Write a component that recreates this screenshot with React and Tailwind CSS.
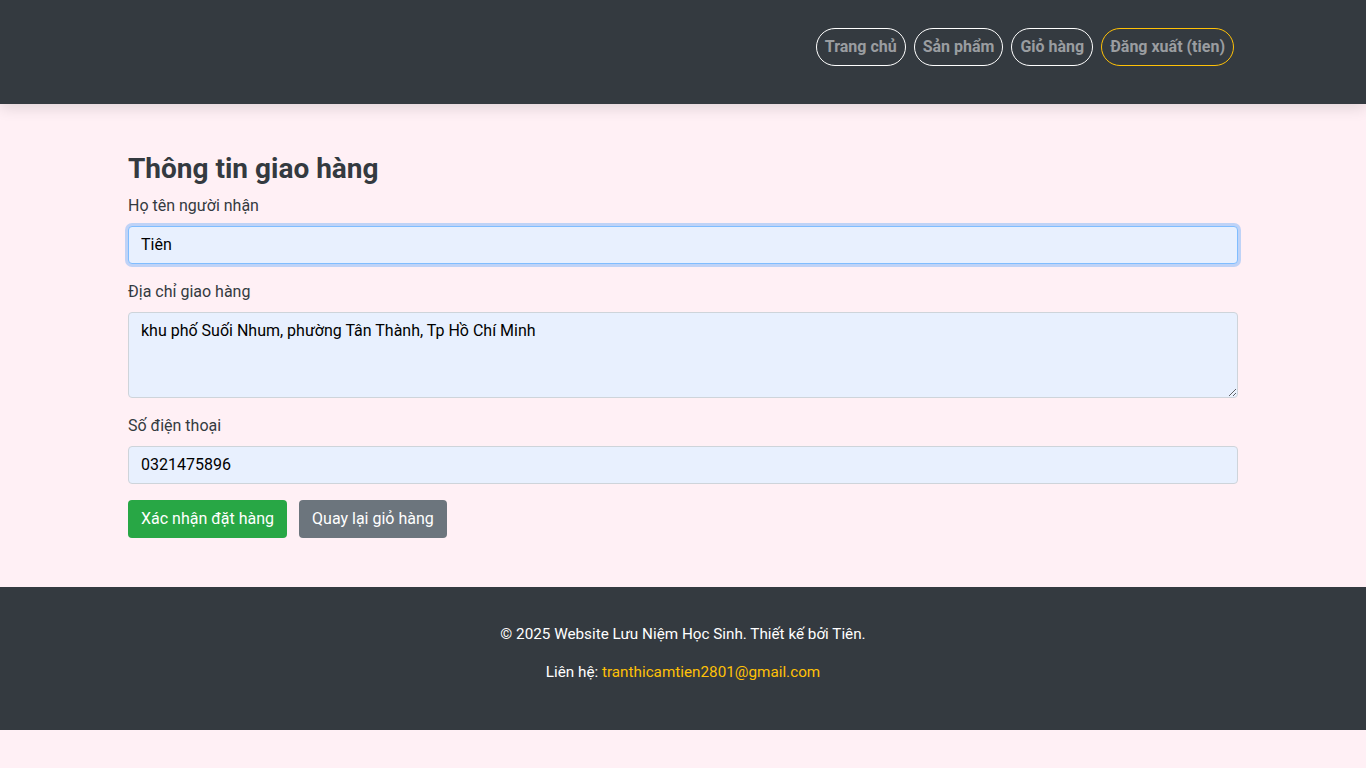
import React, { useState } from 'react';

const navLinks = ['Trang chủ', 'Sản phẩm', 'Giỏ hàng'];

const App = () => {
  const [name, setName] = useState('Tiên');
  const [address, setAddress] = useState('khu phố Suối Nhum, phường Tân Thành, Tp Hồ Chí Minh');
  const [phone, setPhone] = useState('0321475896');

  return (
    <div className="min-h-[768px] bg-[#fff0f5] text-[#212529]" style={{ fontFamily: 'Roboto, "Liberation Sans", sans-serif' }}>
      {/* Header */}
      <header className="relative z-10 h-[104px] bg-[#343a40] shadow-[0_4px_14px_rgba(0,0,0,0.12)]">
        <div className="mx-auto flex h-full w-[1140px] items-start justify-end px-[19px] pt-[28px]">
          <nav className="flex gap-2">
            {navLinks.map((l) => (
              <a key={l} href="#" className="flex h-[38px] items-center rounded-full border border-white px-2 text-base font-bold text-[#9a9da0]">
                {l}
              </a>
            ))}
            <a href="#" className="flex h-[38px] items-center rounded-full border border-[#ffc107] px-2 text-base font-bold text-[#9a9da0]">
              Đăng xuất (tien)
            </a>
          </nav>
        </div>
      </header>

      {/* Checkout form */}
      <main className="mx-auto w-[1140px] px-[15px] pt-[48px] pb-[49px]">
        <h3 className="mb-2 text-[28px] font-bold leading-[1.2] text-[#343a40]">Thông tin giao hàng</h3>
        <form onSubmit={(e) => e.preventDefault()}>
          <div className="mb-4">
            <label className="mb-2 block text-base leading-6 text-[#343a40]">Họ tên người nhận</label>
            <input
              value={name}
              onChange={(e) => setName(e.target.value)}
              className="block h-[38px] w-full rounded border border-[#80bdff] bg-[#e8f0fe] px-3 text-base text-black shadow-[0_0_0_3px_rgba(0,123,255,0.25)] outline-none"
            />
          </div>
          <div className="mb-4">
            <label className="mb-2 block text-base leading-6 text-[#343a40]">Địa chỉ giao hàng</label>
            <textarea
              rows={3}
              value={address}
              onChange={(e) => setAddress(e.target.value)}
              className="block h-[86px] w-full rounded border border-[#ced4da] bg-[#e8f0fe] px-3 py-[6px] text-base leading-6 text-black outline-none"
            />
          </div>
          <div className="mb-4">
            <label className="mb-2 block text-base leading-6 text-[#343a40]">Số điện thoại</label>
            <input
              value={phone}
              onChange={(e) => setPhone(e.target.value)}
              className="block h-[38px] w-full rounded border border-[#ced4da] bg-[#e8f0fe] px-3 text-base text-black outline-none"
            />
          </div>
          <div className="flex gap-3">
            <button type="submit" className="h-[38px] rounded bg-[#28a745] px-[13px] text-base text-white">
              Xác nhận đặt hàng
            </button>
            <button type="button" className="h-[38px] rounded bg-[#6c757d] px-[13px] text-base text-white">
              Quay lại giỏ hàng
            </button>
          </div>
        </form>
      </main>

      {/* Footer */}
      <footer className="h-[143px] bg-[#343a40] pt-[35px] text-center text-[15.25px] leading-6 text-white">
        <p className="mb-[14px]">© 2025 Website Lưu Niệm Học Sinh. Thiết kế bởi Tiên.</p>
        <p>
          Liên hệ: <a href="#" className="text-[#ffc107]">tranthicamtien2801@gmail.com</a>
        </p>
      </footer>
    </div>
  );
};

export default App;
